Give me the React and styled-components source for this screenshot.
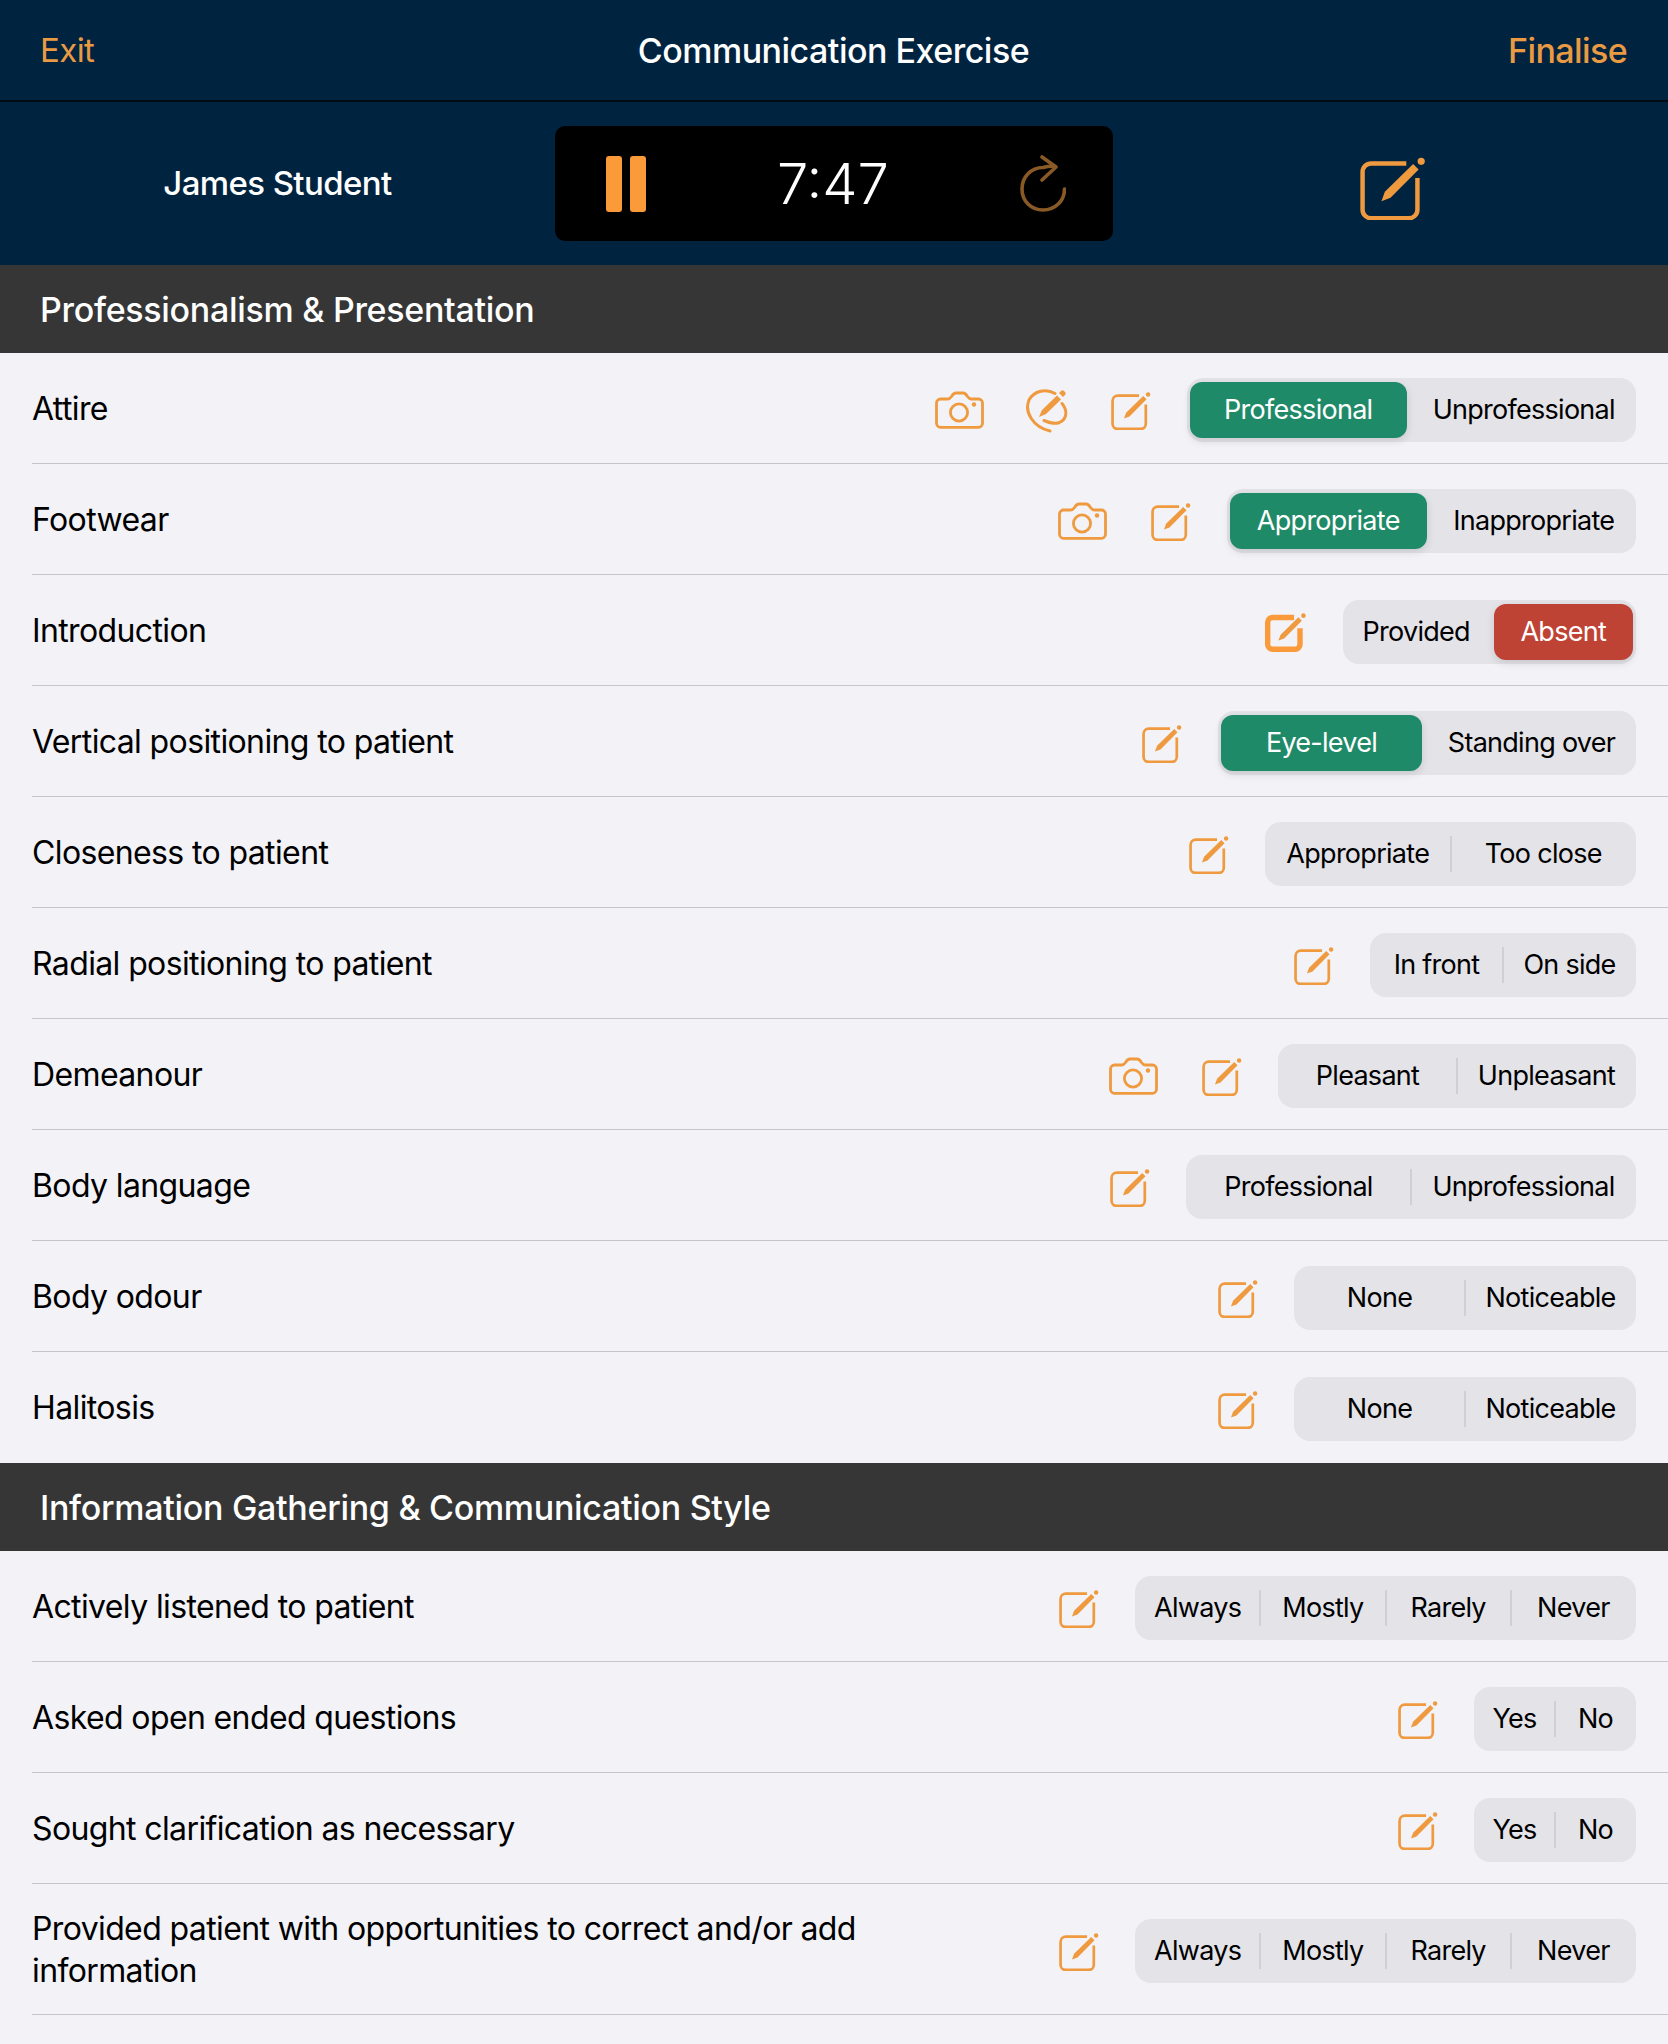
import React from 'react'
import styled, { createGlobalStyle } from 'styled-components'

const ORANGE = '#ef9a3f'

const sections = [
  {
    title: 'Professionalism & Presentation',
    rows: [
      { label: 'Attire', camera: true, markup: true, width: 449, options: ['Professional', 'Unprofessional'], selected: 0 },
      { label: 'Footwear', camera: true, width: 409, options: ['Appropriate', 'Inappropriate'], selected: 0 },
      { label: 'Introduction', noted: true, width: 293, options: ['Provided', 'Absent'], selected: 1, tone: 'red' },
      { label: 'Vertical positioning to patient', width: 418, options: ['Eye-level', 'Standing over'], selected: 0 },
      { label: 'Closeness to patient', width: 371, options: ['Appropriate', 'Too close'] },
      { label: 'Radial positioning to patient', width: 266, options: ['In front', 'On side'] },
      { label: 'Demeanour', camera: true, width: 358, options: ['Pleasant', 'Unpleasant'] },
      { label: 'Body language', width: 450, options: ['Professional', 'Unprofessional'] },
      { label: 'Body odour', width: 342, options: ['None', 'Noticeable'] },
      { label: 'Halitosis', width: 342, options: ['None', 'Noticeable'], last: true },
    ],
  },
  {
    title: 'Information Gathering & Communication Style',
    rows: [
      { label: 'Actively listened to patient', width: 501, options: ['Always', 'Mostly', 'Rarely', 'Never'] },
      { label: 'Asked open ended questions', width: 162, options: ['Yes', 'No'] },
      { label: 'Sought clarification as necessary', width: 162, options: ['Yes', 'No'] },
      { label: 'Provided patient with opportunities to correct and/or add information', width: 501, options: ['Always', 'Mostly', 'Rarely', 'Never'] },
    ],
  },
]

const Pencil = ({ halo }) => (
  <g fill={ORANGE} stroke={halo ? '#f2f2f7' : 'none'} strokeWidth={halo ? 1.5 : 0} paintOrder='stroke'>
    <path d='M12.500 27.500L14.500 22L31 5.800L34.200 9L17.800 25.500Z' />
    <circle cx='35.700' cy='4.300' r='2.100' />
  </g>
)

const EditIcon = ({ size = 40, filled = false }) => (
  <svg
    width={filled ? 42 : size}
    height={filled ? 42 : size}
    viewBox={filled ? '0 0 39 39' : '0 0 38.500 38.500'}
    fill='none'
  >
    {filled ? (
      <path
        d='M27 6H7a4.500 4.500 0 0 0-4.500 4.500V31a4.500 4.500 0 0 0 4.500 4.500H28a4.500 4.500 0 0 0 4.500-4.500V16'
        stroke='#fb9a3a'
        strokeWidth='5'
      />
    ) : (
      <path
        d='M27 5.500H6.500a5 5 0 0 0-5 5V32.500a5 5 0 0 0 5 5H28.500a5 5 0 0 0 5-5V14'
        stroke={ORANGE}
        strokeWidth='2.600'
      />
    )}
    <Pencil halo={filled} />
  </svg>
)

const CameraIcon = () => (
  <svg width='49' height='38' viewBox='0 0 49 38' fill='none' stroke={ORANGE} strokeWidth='2.800'>
    <path d='M5.500 8H12.500C14.500 8 15.500 7 16.500 5.500C17.700 3.500 19 2 21 2H28C30 2 31.300 3.500 32.500 5.500C33.500 7 34.500 8 36.500 8H43.500C45.700 8 47.500 9.800 47.500 12V32C47.500 34.500 45.700 36.300 43.500 36.300H5.500C3.300 36.300 1.500 34.500 1.500 32V12C1.500 9.800 3.300 8 5.500 8Z' />
    <circle cx='24' cy='21.500' r='8.600' />
    <circle cx='39' cy='13.500' r='2.200' fill={ORANGE} stroke='none' />
  </svg>
)

const MarkupIcon = () => (
  <svg width='45' height='45' viewBox='0 0 45 45' fill='none' stroke={ORANGE} strokeWidth='3' strokeLinecap='round'>
    <path d='M30 5.500C21 0 9 3 4 12C-1 24 8 39 25 43' />
    <path d='M37 15.500C42.500 22 42.500 31 34.500 34.500C29 36.500 24 34.500 19 32.500' />
    <path d='M14 29L17 22L32 7.500L36 11.500L21 26Z' fill={ORANGE} stroke='none' />
    <path d='M34 5L36 3a2 2 0 0 1 3 0l1 1a2 2 0 0 1 0 3L38 9Z' fill={ORANGE} stroke='none' />
  </svg>
)

const RestartIcon = () => (
  <svg width='46' height='57' viewBox='0 0 46 57' fill='none' stroke='#8a5a26' strokeWidth='3.600' strokeLinecap='round' strokeLinejoin='round'>
    <path d='M22 2L36 12L22 25' />
    <path d='M35 11.500C31 11 27 11.500 23 12.500C11 12.500 2 22 2 34C2 46 11 55 23 55C35 55 44.500 46 44.500 34' />
  </svg>
)

const App = () => (
  <Page>
    <GlobalStyle />
    <NavBar>
      <NavLink>Exit</NavLink>
      <NavTitle>Communication Exercise</NavTitle>
      <NavLink $strong>Finalise</NavLink>
    </NavBar>
    <StudentBar>
      <StudentName>James Student</StudentName>
      <Timer>
        <PauseBars>
          <PauseBar />
          <PauseBar />
        </PauseBars>
        <TimeText>7:47</TimeText>
        <RestartIcon />
      </Timer>
      <HeaderIcon>
        <EditIcon size={66} />
      </HeaderIcon>
    </StudentBar>
    {sections.map((section) => (
      <section key={section.title}>
        <SectionTitle>{section.title}</SectionTitle>
        {section.rows.map((row) => (
          <Row key={row.label} $last={row.last}>
            <RowLabel>{row.label}</RowLabel>
            <RowActions>
              <IconGroup $gap={row.markup ? 41 : 44}>
                {row.camera && <CameraIcon />}
                {row.markup && <MarkupIcon />}
                <EditIcon filled={row.noted} />
              </IconGroup>
              <Segmented $width={row.width}>
                {row.options.map((option, i) => (
                  <Segment
                    key={option}
                    $active={row.selected === i}
                    $last={i === row.options.length - 1}
                    $tone={row.tone}
                    $divided={row.selected === undefined && i > 0}
                  >
                    {option}
                  </Segment>
                ))}
              </Segmented>
            </RowActions>
          </Row>
        ))}
      </section>
    ))}
  </Page>
)

export default App

const GlobalStyle = createGlobalStyle`
  body {
    margin: 0;
    background: #f2f2f7;
    font-family: Inter, "Liberation Sans", sans-serif;
    color: #000;
  }
`

const Page = styled.div`
  min-height: 2044px;
  background: #f2f2f7;
`

const NavBar = styled.header`
  display: grid;
  grid-template-columns: 1fr auto 1fr;
  align-items: center;
  height: 100px;
  padding: 0 41px 0 40px;
  background: #002340;
  border-bottom: 2px solid #000b16;
`

const NavLink = styled.div`
  color: #e99a42;
  font-size: ${(p) => (p.$strong ? 34 : 33)}px;
  font-weight: ${(p) => (p.$strong ? 500 : 400)};
  text-align: ${(p) => (p.$strong ? 'right' : 'left')};
  letter-spacing: -0.6px;
`

const NavTitle = styled.h1`
  margin: 0;
  color: #fff;
  font-size: 34px;
  font-weight: 500;
  letter-spacing: -0.5px;
`

const StudentBar = styled.div`
  display: grid;
  grid-template-columns: 1fr 558px 1fr;
  align-items: center;
  height: 163px;
  background: #002340;
`

const StudentName = styled.div`
  padding-bottom: 2px;
  color: #fff;
  font-size: 33px;
  font-weight: 500;
  text-align: center;
  letter-spacing: -0.6px;
`

const Timer = styled.div`
  display: flex;
  align-items: center;
  justify-content: space-between;
  height: 115px;
  padding: 0 47px 0 51px;
  background: #000;
  border-radius: 10px;
`

const PauseBars = styled.div`
  display: flex;
  gap: 8px;
`

const PauseBar = styled.span`
  width: 16px;
  height: 56px;
  background: #fb9a38;
  border-radius: 3px;
`

const TimeText = styled.div`
  color: #fff;
  font-size: 56px;
  font-weight: 300;
`

const HeaderIcon = styled.div`
  display: flex;
  justify-content: center;
  padding: 6px 0 0 5px;
`

const SectionTitle = styled.h2`
  display: flex;
  align-items: center;
  height: 88px;
  margin: 0;
  padding-left: 40px;
  background: #363636;
  color: #fff;
  font-size: 34px;
  font-weight: 500;
  letter-spacing: -0.3px;
`

const Row = styled.div`
  display: flex;
  align-items: center;
  justify-content: space-between;
  min-height: 110px;
  margin-left: 32px;
  padding-right: 32px;
  border-bottom: 1px solid ${(p) => (p.$last ? 'transparent' : '#c6c6c8')};
`

const RowLabel = styled.div`
  max-width: 880px;
  padding: 24px 0 22px;
  font-size: 32px;
  line-height: 42px;
  letter-spacing: -0.62px;
`

const RowActions = styled.div`
  display: flex;
  align-items: center;
  gap: 36px;
  margin-top: 4px;
`

const IconGroup = styled.div`
  display: flex;
  align-items: center;
  gap: ${(p) => p.$gap}px;
`

const Segmented = styled.div`
  display: grid;
  grid-auto-flow: column;
  grid-auto-columns: 1fr;
  width: ${(p) => p.$width}px;
  height: 64px;
  background: #e3e3e8;
  border-radius: 16px;
`

const Segment = styled.div`
  position: relative;
  display: flex;
  align-items: center;
  justify-content: center;
  padding-bottom: 1px;
  font-size: 27px;
  letter-spacing: -0.72px;
  white-space: nowrap;
  border-radius: 12px;
  margin: ${(p) => {
    if (!p.$active) return '0'
    return p.$last ? '4px 3px 4px 4px' : '4px 5px 4px 3px'
  }};
  color: ${(p) => (p.$active ? '#fff' : '#000')};
  background: ${(p) => {
    if (!p.$active) return 'transparent'
    return p.$tone === 'red' ? '#bf4335' : '#1f8a68'
  }};
  box-shadow: ${(p) => (p.$active ? '0 3px 8px rgba(0, 0, 0, 0.12)' : 'none')};

  &::before {
    content: '';
    display: ${(p) => (p.$divided ? 'block' : 'none')};
    position: absolute;
    left: -1px;
    top: 14px;
    bottom: 14px;
    width: 2px;
    background: #cfcfd4;
  }
`
